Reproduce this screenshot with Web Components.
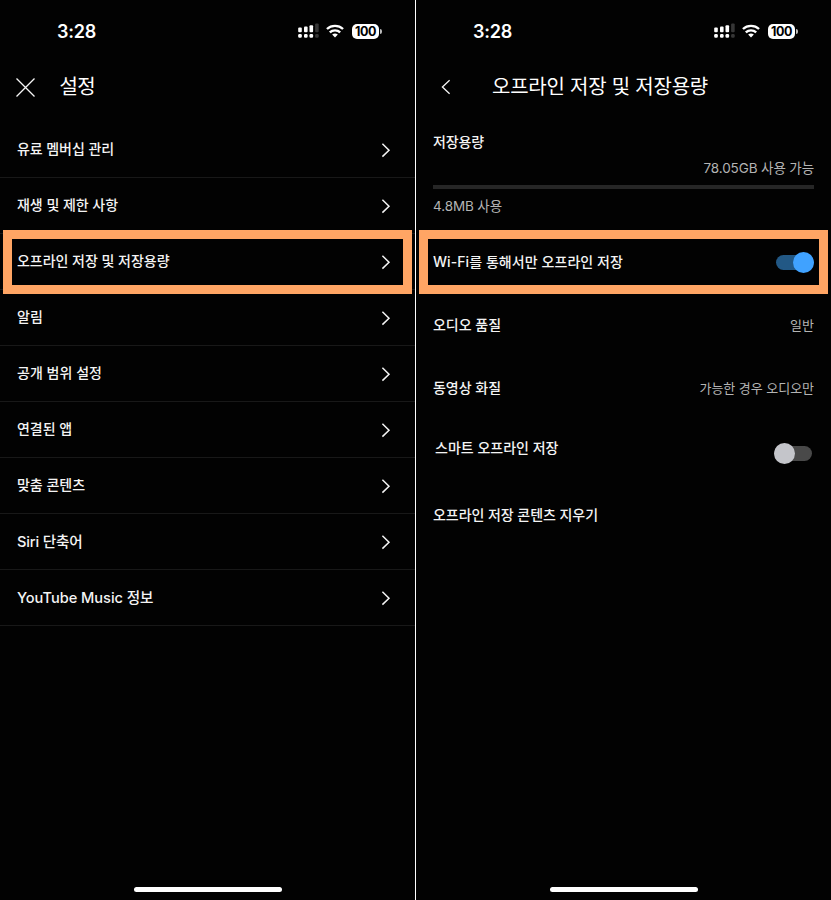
<!DOCTYPE html>
<html lang="ko">
<head>
<meta charset="utf-8">
<title>설정</title>
<style>
html,body{margin:0;background:#000}
body{width:831px;height:900px;overflow:hidden;font-family:Inter,"Noto Sans CJK KR",sans-serif;color:#f4f4f4}
</style>
</head>
<body>
<settings-board></settings-board>
<script>
const define = (name, html, after) => {
  const template = document.createElement('template');
  template.innerHTML = html;
  customElements.define(name, class extends HTMLElement {
    constructor() {
      super();
      this.attachShadow({ mode: 'open' }).append(template.content.cloneNode(true));
    }
    connectedCallback() { if (after) after(this, this.shadowRoot); }
  });
};

/* Text run whose tracking is adjusted to a given advance width. */
define('fit-text', `<style>
:host{display:block;white-space:nowrap;line-height:20px}
span{display:inline-block}
</style><span></span>`, (host, root) => {
  const span = root.querySelector('span');
  const text = host.getAttribute('text');
  span.textContent = text;
  const width = parseFloat(host.getAttribute('w'));
  if (width) {
    const gap = (width - span.getBoundingClientRect().width) / text.length;
    span.style.letterSpacing = gap.toFixed(3) + 'px';
  }
});

define('status-bar', `<style>
:host{display:flex;height:62px;align-items:center;box-sizing:border-box;padding:0 33.5px 0 57px;color:#fff}
fit-text{font-size:18px;font-weight:600;flex:1;padding-top:2px}
svg{display:block}
.wifi{margin:0 8px 0 7.5px}
</style>
<fit-text text="3:28" w="39"></fit-text>
<svg width="21" height="16" viewBox="0 0 21 16" fill="#fff"><rect x=".2" y="4.6" width="3.6" height="4.6" rx="1"/><rect x="6" y="3.6" width="3.6" height="5.6" rx="1"/><rect x="11.5" y="2.2" width="3.6" height="7" rx="1"/><rect x="17.1" y=".4" width="3.6" height="8.8" rx="1" fill="#363636"/><rect x=".2" y="11" width="3.6" height="3.8" rx="1.2"/><rect x="6" y="11" width="3.6" height="3.8" rx="1.2"/><rect x="11.5" y="11" width="3.6" height="3.8" rx="1.2"/><rect x="17.1" y="11" width="3.6" height="3.8" rx="1.2" fill="#363636"/></svg>
<svg class="wifi" width="18" height="14" viewBox="0 0 17 14" preserveAspectRatio="none" fill="none" stroke="#fff" stroke-width="2.2"><path d="M.9 5A10.8 10.8 0 0 1 16.1 5M3.6 8.4A7 7 0 0 1 13.4 8.4"/><path fill="#fff" stroke="none" d="M5.8 10.6A4.2 4.2 0 0 1 11.2 10.6L8.5 13.6Z"/></svg>
<battery-level></battery-level>`);

define('battery-level', `<style>
:host{display:flex;align-items:center;gap:.5px;width:29.5px}
div{width:27px;height:15px;border-radius:5px;background:#fff;color:#000;font-size:12.5px;font-weight:700;display:flex;justify-content:center;align-items:center}
fit-text{line-height:15px}
i{width:2px;height:5px;border-radius:0 2px 2px 0;background:#bbb}
</style><div><fit-text text="100" w="21"></fit-text></div><i></i>`);

define('phone-screen', `<style>
:host{display:flex;flex-direction:column;width:415px;height:900px;background:#020202}
main{flex:1}
.home{width:148px;height:5px;border-radius:3px;background:#fff;margin:0 0 8px 134px}
</style><status-bar></status-bar><slot name="header"></slot><main><slot></slot></main><div class="home"></div>`);

define('screen-header', `<style>
:host{display:flex;height:50px;align-items:center}
fit-text{font-size:20px;font-weight:400;line-height:28px;color:#fff}
svg{display:block;fill:none;stroke:#f6f6f6;stroke-width:1.3}
.close{margin:0 24.5px 0 16px}
.back{margin:0 41px 0 25px}
</style>`, (host, root) => {
  const icon = host.getAttribute('icon') === 'close'
    ? '<svg class="close" width="19" height="19" viewBox="0 0 19 19"><path d="M.5.5 18.5 18.5M18.5.5.5 18.5"/></svg>'
    : '<svg class="back" width="10" height="16" viewBox="0 0 10 16"><path d="M8.6 1.2 1.4 8 8.6 14.8"/></svg>';
  root.innerHTML += icon + `<fit-text text="${host.getAttribute('label')}" w="${host.getAttribute('w')}"></fit-text>`;
});

define('menu-row', `<style>
:host{display:flex;height:56px;box-sizing:border-box;border-bottom:1px solid #181818;align-items:center;justify-content:space-between;padding:0 24px 1px 17px;position:relative}
fit-text{font-size:14px;font-weight:500}
:host([latin]) fit-text{font-size:14.6px;padding-top:2px}
svg{display:block;fill:none;stroke:#f4f4f4;stroke-width:1.5;padding-top:1px}
</style>`, (host, root) => {
  root.innerHTML += `<fit-text text="${host.getAttribute('label')}" w="${host.getAttribute('w')}"></fit-text>
  <svg width="10" height="16" viewBox="0 0 10 16"><path d="M1.4 1.8 8 8.2 1.4 14.6"/></svg>`;
  if (host.hasAttribute('marked')) root.innerHTML += '<focus-frame></focus-frame>';
});

/* Orange frame laid over a highlighted row. */
define('focus-frame', `<style>
:host{position:absolute;z-index:1;left:3px;top:-4px;width:409px;height:64px;box-sizing:border-box;border:9px solid #ffa564}
</style>`);

define('toggle-switch', `<style>
:host{display:flex;width:38px;height:21px;align-items:center}
div{width:38px;height:15px;border-radius:8px;background:#494949;display:flex;align-items:center}
i{width:21px;height:21px;flex:none;border-radius:50%;background:#c4c5ca}
:host([on]) div{background:#225885;justify-content:flex-end}
:host([on]) i{background:#40a2ff}
</style><div><i></i></div>`);

define('option-row', `<style>
:host{display:flex;box-sizing:border-box;align-items:center;justify-content:space-between;padding:0 17px;position:relative}
fit-text{font-size:14px;font-weight:500}
.value{font-size:13px;font-weight:400;color:#b4b4b4}
</style>`, (host, root) => {
  const value = host.getAttribute('value');
  root.innerHTML += `<fit-text text="${host.getAttribute('label')}" w="${host.getAttribute('w')}"></fit-text>` +
    (value ? `<fit-text class="value" text="${value}" w="${host.getAttribute('vw')}"></fit-text>` : '<slot></slot>') +
    (host.hasAttribute('marked') ? '<focus-frame></focus-frame>' : '');
});

define('storage-meter', `<style>
:host{display:flex;flex-direction:column;box-sizing:border-box;height:122px;padding:20px 17px 0}
.title{font-size:14px;font-weight:500}
.free,.used{font-size:13.5px;color:#b4b4b4}
.free{align-self:flex-end;margin-top:6px}
.bar{height:4px;background:#262626;margin:7px 0}
</style>
<fit-text class="title" text="저장용량" w="51"></fit-text>
<fit-text class="free" text="78.05GB 사용 가능" w="110.5"></fit-text>
<div class="bar"></div>
<fit-text class="used" text="4.8MB 사용" w="69"></fit-text>`);

define('settings-board', `<style>
:host{display:flex;width:831px;height:900px}
.split{width:1px;background:#fff}
.list{padding-top:10px}
</style>
<phone-screen>
 <screen-header slot="header" icon="close" label="설정" w="35.5"></screen-header>
 <div class="list">
 <menu-row label="유료 멤버십 관리" w="97"></menu-row>
 <menu-row label="재생 및 제한 사항" w="101"></menu-row>
 <menu-row label="오프라인 저장 및 저장용량" w="152.5" marked></menu-row>
 <menu-row label="알림" w="26"></menu-row>
 <menu-row label="공개 범위 설정" w="85"></menu-row>
 <menu-row label="연결된 앱" w="55"></menu-row>
 <menu-row label="맞춤 콘텐츠" w="68"></menu-row>
 <menu-row latin label="Siri 단축어" w="65.5"></menu-row>
 <menu-row latin label="YouTube Music 정보" w="136.5"></menu-row>
 </div>
</phone-screen>
<div class="split"></div>
<phone-screen>
 <screen-header slot="header" icon="back" label="오프라인 저장 및 저장용량" w="216"></screen-header>
 <storage-meter></storage-meter>
 <option-row style="height:56px" label="Wi-Fi를 통해서만 오프라인 저장" w="190" marked><toggle-switch on></toggle-switch></option-row>
 <option-row style="height:70px" label="오디오 품질" w="68" value="일반" vw="24"></option-row>
 <option-row style="height:56px" label="동영상 화질" w="68" value="가능한 경우 오디오만" vw="114.5"></option-row>
 <option-row style="height:63px;padding-left:19px;padding-right:19px" label="스마트 오프라인 저장" w="123.5"><toggle-switch style="margin-top:12px"></toggle-switch></option-row>
 <option-row style="height:71px" label="오프라인 저장 콘텐츠 지우기" w="165"></option-row>
</phone-screen>`);
</script>
</body>
</html>
